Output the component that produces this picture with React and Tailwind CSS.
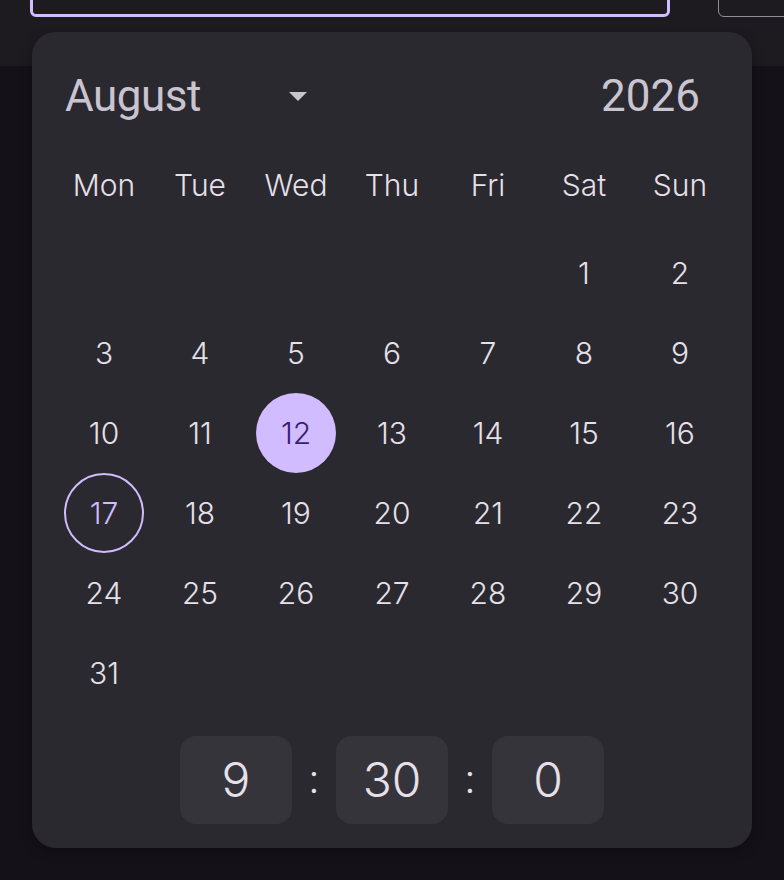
import React from "react";

const WEEKDAYS = ["Mon", "Tue", "Wed", "Thu", "Fri", "Sat", "Sun"];

// August 2026 starts on a Saturday (Mon-first grid => 5 blanks)
const buildDays = () => {
  const cells = [];
  for (let i = 0; i < 5; i++) cells.push(null);
  for (let d = 1; d <= 31; d++) cells.push(d);
  return cells;
};

const SELECTED = 12;
const TODAY = 17;

function DayCell({ day }) {
  if (day === null) return <div />;
  let cls =
    "w-[80px] h-[80px] rounded-full flex items-center justify-center text-[#e6e0e9]";
  if (day === SELECTED) {
    cls =
      "w-[80px] h-[80px] rounded-full flex items-center justify-center bg-[#d0bcff] text-[#381e72]";
  } else if (day === TODAY) {
    cls =
      "w-[80px] h-[80px] rounded-full flex items-center justify-center border-2 border-[#d0bcff] text-[#d0bcff]";
  }
  return (
    <div className="flex items-center justify-center">
      <div className={cls}>{day}</div>
    </div>
  );
}

function TimeBox({ value }) {
  return (
    <div className="w-[112px] h-[88px] rounded-[16px] bg-[#36343b] flex items-center justify-center text-[48px] font-light text-[#e6e0e9]">
      {value}
    </div>
  );
}

function Colon() {
  return (
    <div className="w-[44px] flex items-center justify-center text-[40px] font-light text-[#e6e0e9] pb-[2px]">
      :
    </div>
  );
}

export default function App() {
  const days = buildDays();
  return (
    <div
      className="relative w-[784px] h-[880px] overflow-hidden bg-[#141218]"
      style={{ fontFamily: "Inter, 'Noto Sans', sans-serif" }}
    >
      {/* app bar with the date field peeking in from above */}
      <div className="h-[66px] bg-[#1d1b20] flex items-start">
        <div className="shrink-0 ml-[30px] -mt-[33px] w-[640px] h-[50px] rounded-[6px] border-[3px] border-[#d0bcff]" />
        <div className="shrink-0 ml-[48px] -mt-[33px] w-[120px] h-[50px] rounded-[6px] border border-[#938f99]" />
      </div>

      {/* date picker popover */}
      <div className="absolute left-[32px] top-[32px] w-[720px] h-[816px] rounded-[24px] bg-[#2b2930] shadow-[0_4px_12px_rgba(0,0,0,0.3)] p-6 flex flex-col">
        <div
          className="h-[80px] flex items-center justify-between text-[44px] text-[#cac4d0]"
          style={{ fontFamily: "Roboto, 'Liberation Sans', sans-serif" }}
        >
          <div className="flex items-center">
            <span className="pl-[9px] w-[233px] tracking-[-0.5px]">August</span>
            <svg width="18" height="10" viewBox="0 0 18 10" className="mt-[1px]">
              <path d="M0 0 L18 0 L9 9 Z" fill="#cac4d0" />
            </svg>
          </div>
          <span className="pr-[28px]">2026</span>
        </div>

        <div className="grid grid-cols-7 h-[97px] pt-[2px] items-center text-[30px] font-light text-[#e6e0e9]">
          {WEEKDAYS.map((w) => (
            <div key={w} className="text-center">
              {w}
            </div>
          ))}
        </div>

        <div className="grid grid-cols-7 auto-rows-[80px] text-[30px] font-light">
          {days.map((d, i) => (
            <DayCell key={i} day={d} />
          ))}
        </div>

        <div className="mt-auto flex items-center justify-center">
          <TimeBox value="9" />
          <Colon />
          <TimeBox value="30" />
          <Colon />
          <TimeBox value="0" />
        </div>
      </div>
    </div>
  );
}
